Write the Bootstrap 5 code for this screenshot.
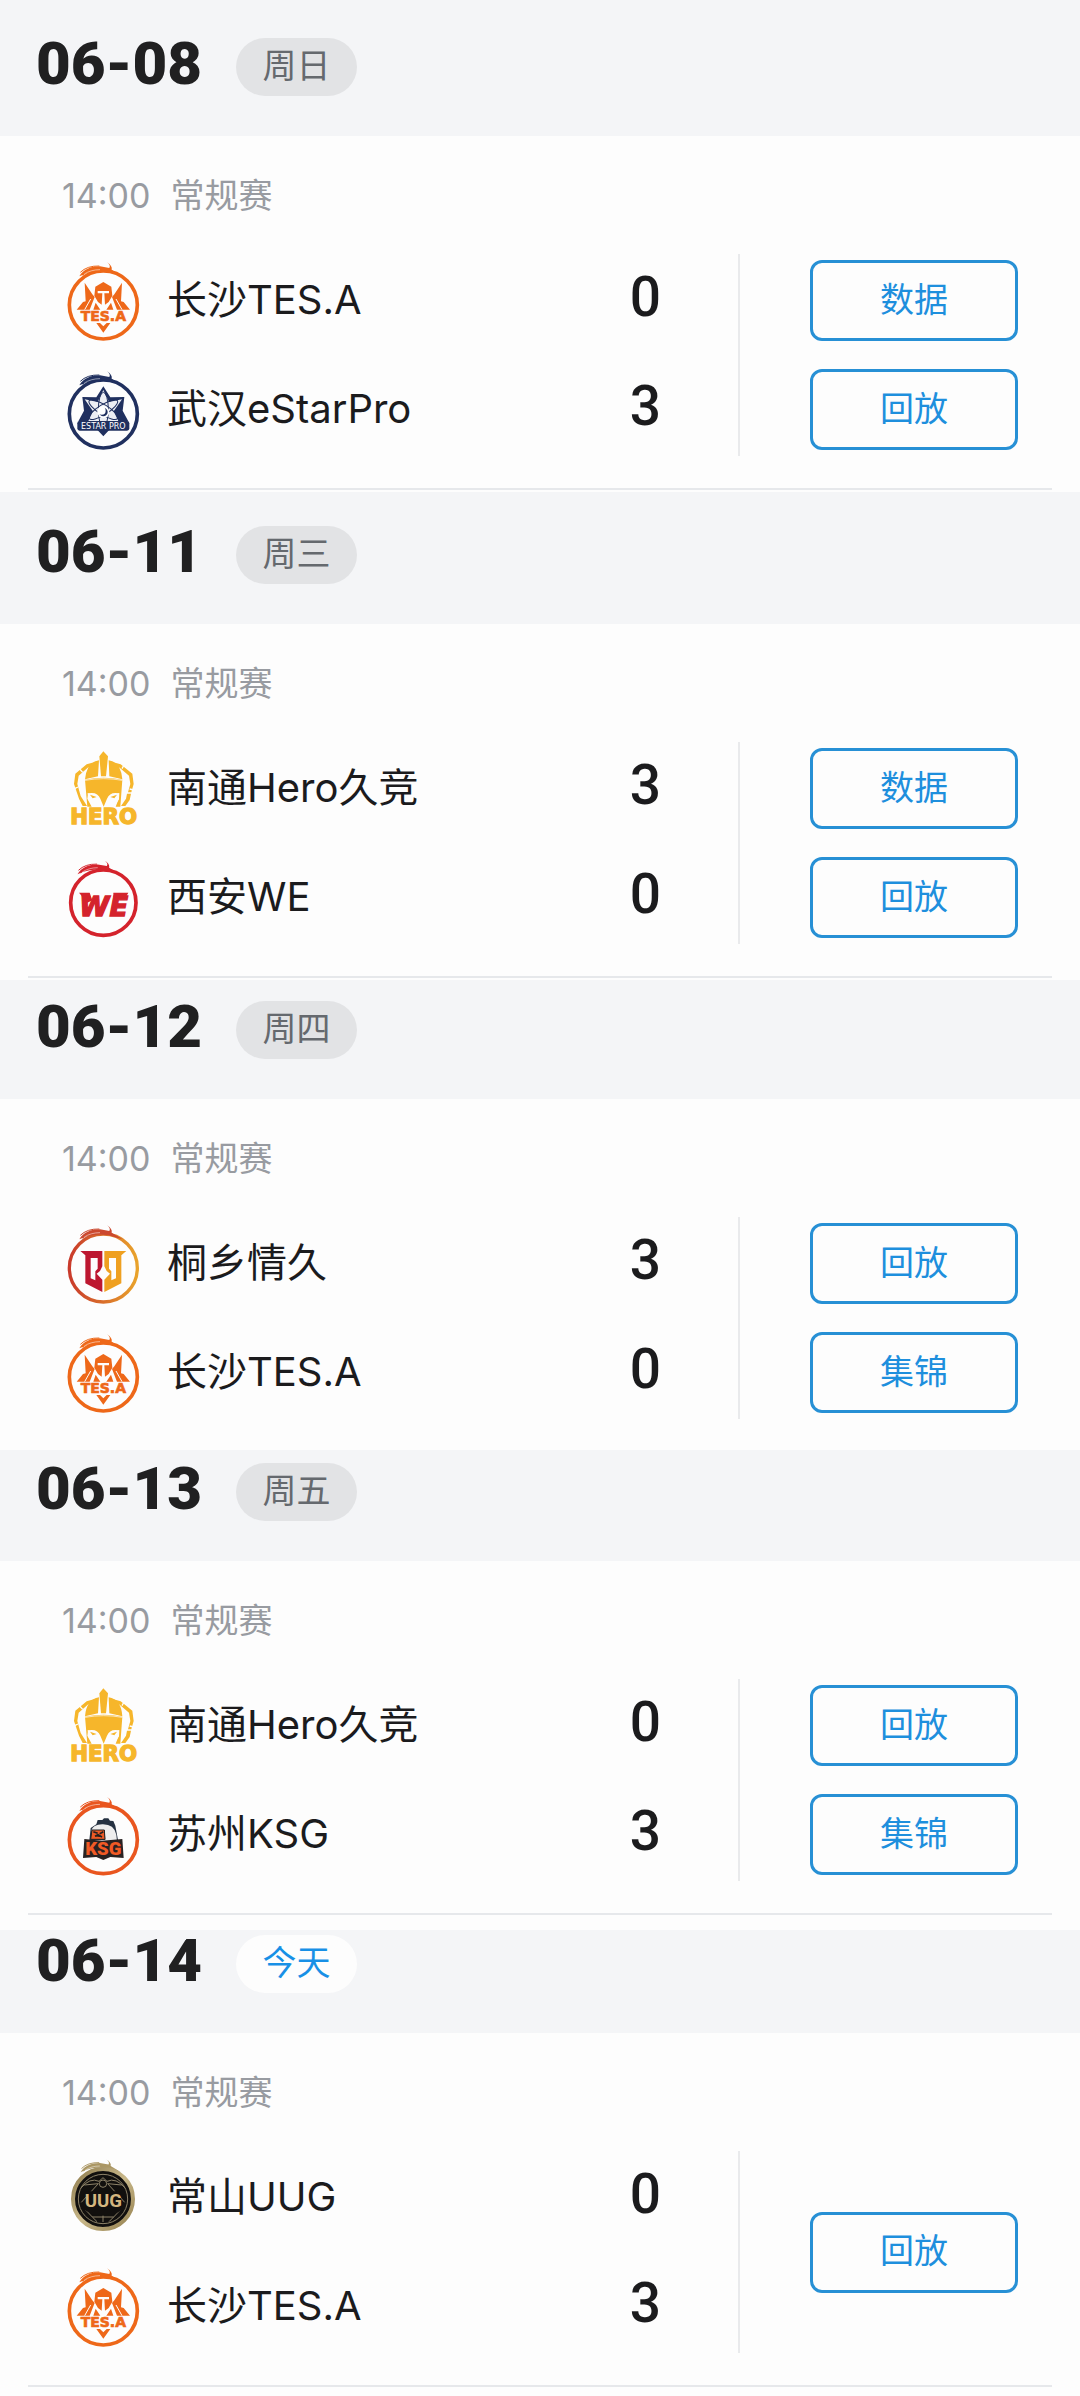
<!DOCTYPE html>
<html lang="zh-CN">
<head>
<meta charset="utf-8">
<meta name="viewport" content="width=device-width, initial-scale=1">
<title>赛程</title>
<link href="https://cdn.jsdelivr.net/npm/bootstrap@5.3.0/dist/css/bootstrap.min.css" rel="stylesheet">
<style>
  body { background: #fdfdfd; color: #1b1b1d; font-family: Inter, "Noto Sans CJK SC", sans-serif; }
  .day-head { background: #f4f5f7; padding: 38px 36px 40px; gap: 36px; }
  .day-head.lead-34 { padding-top: 34px; }
  .day-head.lead-21 { padding-top: 21px; }
  .day-head.lead-13 { padding-top: 13px; }
  .day-head.lead-5 { padding-top: 5px; }
  .day-date { font: 900 60px/52px Roboto, sans-serif; width: 164px; color: #202021; }
  .day-pill { width: 121px; height: 58px; font-size: 34px; line-height: 55px; background: #e2e3e5; color: #65696e; }
  .day-pill.today { background: #fdfdfd; color: #1890e6; }
  .match { padding: 35px 28px 0; }
  .match-info { font-size: 34px; line-height: 50px; gap: 20px; padding: 0 34px 33px; color: #989ba1; }
  .match-body { padding-left: 30px; padding-right: 34px; }
  .teams { gap: 16px; padding-right: 77px; border-right: 2px solid #e9eaec; }
  .team { height: 93px; }
  .team-logo { width: 90px; height: 90px; margin-right: 19px; }
  .team-name { font-size: 40px; line-height: 88px; padding-bottom: 2px; }
  .team-score { font: 500 55px/83px Roboto, sans-serif; padding-bottom: 6px; }
  .actions { gap: 28px; width: 278px; }
  .btn-act { width: 208px; height: 81px; padding: 0 0 2px; font-size: 34px; line-height: 1; border: 3px solid #2790d5; border-radius: 12px; color: #1e8fdd; }
  .btn-act:hover { background: #2790d5; color: #fff; }
  .rule { height: 2px; margin-top: 32px; margin-bottom: 2px; background: #e6e8eb; }
  .rule.space-15 { margin-bottom: 15px; }
  .no-rule { padding-bottom: 31px; }
  .c-tes { color: #ee6819; } .c-estar { color: #20305f; } .c-we { color: #d4232c; } .c-ksg { color: #e9561f; } .c-gold { color: #ab9764; }
  .c-hero { color: #f6b62b; }
</style>
</head>
<body>
<svg class="position-absolute" width="0" height="0" aria-hidden="true" xmlns="http://www.w3.org/2000/svg">
  <defs>
    <linearGradient id="gg" x1="0" x2="1"><stop offset="0" stop-color="#c93a2b"/><stop offset="1" stop-color="#e9a32b"/></linearGradient>
    <linearGradient id="au" x1="0" x2="1" y2="1"><stop offset="0" stop-color="#8d7a4c"/><stop offset=".5" stop-color="#c9b88a"/><stop offset="1" stop-color="#94804e"/></linearGradient>
  </defs>
  <symbol id="flame" viewBox="24 16 270 270">
    <path d="M88 77C100 56 122 47 150 47L178 52Q183 44 171 35Q188 46 185 57L217 76L201 72Q169 60 139 63Q111 65 88 77Z" fill="currentColor"/>
    <path d="M91 65Q111 45 148 46M97 73Q116 57 144 57" fill="none" stroke="currentColor" stroke-width="3"/>
    <path d="M103 70Q123 57 150 57" fill="none" stroke="#fff" stroke-width="1.5"/>
  </symbol>
  <symbol id="ring" viewBox="24 16 270 270">
    <circle cx="160" cy="163" r="102" fill="none" stroke="currentColor" stroke-width="11"/>
    <use href="#flame" x="24" y="16" width="270" height="270"/>
  </symbol>
  <symbol id="tes" viewBox="24 16 270 270">
    <use href="#ring" x="24" y="16" width="270" height="270"/>
    <g fill="currentColor">
      <path d="M104 96L127 131L134 139L119 177H80L99 154L107 152Z"/>
      <path d="M216 96L193 131L186 139L201 177H240L221 154L213 152Z"/>
      <path d="M160 94L184 108L187 135L176 154L165 162L163 128H177V121H143V128H157L155 162L144 154L133 135L136 108Z"/>
      <path d="M137 156L151 177H130ZM183 156L169 177H190Z"/>
      <path d="M139 217H150L160 227L170 217H181L160 246Z"/>
    </g>
    <path d="M104 177L122 145M216 177L198 145" fill="none" stroke="#fdfdfd" stroke-width="3"/>
    <text x="160" y="212" text-anchor="middle" font-family="DejaVu Sans, sans-serif" font-weight="700" font-size="42" fill="currentColor" stroke="currentColor" stroke-width="2">TES.A</text>
  </symbol>
  <symbol id="estar" viewBox="24 16 270 270">
    <use href="#ring" x="24" y="16" width="270" height="270"/>
    <path d="M160 80L181 113L223 112L218 153L235 185L181 207L160 230L139 207L85 185L102 153L97 112L139 113Z" fill="currentColor"/>
    <path d="M160 91L177 127L216 119L191 155L206 186H114L129 155L104 119L143 127Z" fill="#eceef4"/>
    <g fill="none" stroke="currentColor" stroke-width="3">
      <ellipse cx="160" cy="150" rx="15" ry="52"/>
      <ellipse cx="160" cy="150" rx="15" ry="50" transform="rotate(58 160 150)"/>
      <ellipse cx="160" cy="150" rx="15" ry="50" transform="rotate(-58 160 150)"/>
    </g>
    <circle cx="160" cy="157" r="18" fill="#fff"/><circle cx="160" cy="157" r="13" fill="currentColor"/><circle cx="155" cy="153" r="12" fill="#fff"/>
    <rect x="82" y="184" width="156" height="29" rx="7" fill="currentColor"/>
    <text x="160" y="207" text-anchor="middle" font-family="DejaVu Sans, sans-serif" font-size="24" fill="#fff">ESTAR PRO</text>
  </symbol>
  <symbol id="hero" viewBox="24 16 270 270">
    <g fill="currentColor">
      <path d="M148 53L160 38L174 53L168 113H153Z"/>
      <path d="M147 65Q109 72 105 122L144 113ZM176 65Q214 72 217 122L178 113Z"/>
      <path d="M105 123Q161 111 217 123L211 204H197L206 180L207 164Q180 158 171 180L161 204L151 180Q142 158 115 164L112 180L125 204H112Z"/>
      <path d="M142 68L110 77L76 105L72 136L87 180L98 202H111L92 172L82 136L86 111L113 87L139 78ZM180 68L212 77L247 105L251 136L244 161L234 161L241 136L237 111L209 87L184 78ZM231 165H243L239 184L226 202H213L228 180Z"/>
    </g>
    <path d="M113 163L146 175L137 204H128L114 182ZM208 163L175 175L184 204H193L207 182Z" fill="#fdfdfd"/>
    <path d="M120 168L140 175L128 179ZM201 168L181 175L193 179Z" fill="currentColor"/>
    <path d="M105 125Q161 115 217 125" fill="none" stroke="#fdfdfd" stroke-width="2"/>
    <path d="M69 152L84 145M89 91L98 101M239 151L251 154M222 79L216 90" stroke="#fdfdfd" stroke-width="4"/>
    <text x="161" y="255" text-anchor="middle" font-family="DejaVu Sans, sans-serif" font-weight="700" font-size="64" fill="currentColor" stroke="currentColor" stroke-width="4">HERO</text>
  </symbol>
  <symbol id="we" viewBox="24 16 270 270">
    <circle cx="160" cy="165" r="98" fill="none" stroke="currentColor" stroke-width="11"/>
    <use href="#flame" x="20" y="20" width="264" height="264"/>
    <path d="M87 135H119L127 158L112 165ZM190 135H235L228 147H190Z" fill="currentColor"/>
    <text x="161" y="204" text-anchor="middle" font-family="DejaVu Sans, sans-serif" font-style="italic" font-weight="700" font-size="82" fill="currentColor" stroke="currentColor" stroke-width="4">WE</text>
  </symbol>
  <symbol id="qing" viewBox="24 16 270 270">
    <circle cx="160" cy="163" r="102" fill="none" stroke="url(#gg)" stroke-width="10"/>
    <g color="#cb482e"><use href="#flame" x="24" y="16" width="270" height="270"/></g>
    <path d="M91 112H157V158L150 172L140 180L157 198V235L106 209V125ZM122 133V194L136 200V173L143 165V133Z" fill="#bd1730" fill-rule="evenodd"/>
    <path d="M229 112H163V158L170 172L180 180L163 198V235L214 209V125ZM198 133V194L184 200V173L177 165V133Z" fill="#efa020" fill-rule="evenodd"/>
  </symbol>
  <symbol id="ksg" viewBox="24 16 270 270">
    <g transform="translate(0 2)"><use href="#ring" x="24" y="16" width="270" height="270"/></g>
    <path d="M118 167L122 130L139 119L143 106H157L162 101H175L180 108L190 109L196 123L204 166Z" fill="#263242"/>
    <path d="M124 138Q128 120 157 119Q192 118 199 150L201 170H166L164 136Z" fill="#eee"/>
    <path d="M126 136H163L165 164H122Z" fill="#ed5a25" stroke="#222" stroke-width="3"/>
    <path d="M130 141L143 146M149 147L160 141M135 155L144 150L156 157" stroke="#222" stroke-width="5"/>
    <path d="M103 163L156 168L217 163L221 220L181 217L160 226L139 217L99 220Z" fill="#292222"/>
    <text x="160" y="212" text-anchor="middle" font-family="Roboto, sans-serif" font-weight="900" font-size="56" fill="#f15a25">KSG</text>
  </symbol>
  <symbol id="uug" viewBox="24 16 270 270">
    <g transform="translate(10 2) scale(.93)"><use href="#flame" x="24" y="16" width="270" height="270"/></g>
    <circle cx="159" cy="154" r="90" fill="#12100e" stroke="url(#au)" stroke-width="12"/>
    <circle cx="159" cy="154" r="74" fill="none" stroke="#8d8268" stroke-width="3"/>
    <g fill="none" stroke="#8d8268" stroke-width="3"><path d="M92 122Q120 88 147 101L159 90L171 101Q198 88 226 122M103 112L145 108L94 164M215 112L173 108L224 164M108 188L127 208H191L210 188M159 204V223M127 208L141 222M191 208L177 222"/><circle cx="159" cy="108" r="11"/></g>
    <path d="M108 131H212V189L190 201H130L108 189Z" fill="#12100e"/>
    <text x="160" y="178" text-anchor="middle" font-family="Roboto, sans-serif" font-weight="700" font-size="56" fill="#d4b67f">UUG</text>
  </symbol>
</svg>

<main>
  <section>
    <header class="day-head d-flex align-items-start">
      <h2 class="day-date m-0 text-nowrap">06-08</h2>
      <span class="day-pill rounded-pill text-center">周日</span>
    </header>
    <article class="match">
      <div class="match-info d-flex"><time>14:00</time><span>常规赛</span></div>
      <div class="match-body d-flex">
        <div class="teams d-flex flex-column flex-grow-1">
          <div class="team d-flex align-items-center"><svg class="team-logo c-tes"><use href="#tes"/></svg><span class="team-name">长沙TES.A</span><span class="team-score ms-auto">0</span></div>
          <div class="team d-flex align-items-center"><svg class="team-logo c-estar"><use href="#estar"/></svg><span class="team-name">武汉eStarPro</span><span class="team-score ms-auto">3</span></div>
        </div>
        <div class="actions d-flex flex-column align-items-end justify-content-center"><button type="button" class="btn btn-act">数据</button><button type="button" class="btn btn-act">回放</button></div>
      </div>
      <div class="rule"></div>
    </article>
  </section>

  <section>
    <header class="day-head lead-34 d-flex align-items-start">
      <h2 class="day-date m-0 text-nowrap">06-11</h2>
      <span class="day-pill rounded-pill text-center">周三</span>
    </header>
    <article class="match">
      <div class="match-info d-flex"><time>14:00</time><span>常规赛</span></div>
      <div class="match-body d-flex">
        <div class="teams d-flex flex-column flex-grow-1">
          <div class="team d-flex align-items-center"><svg class="team-logo c-hero"><use href="#hero"/></svg><span class="team-name">南通Hero久竞</span><span class="team-score ms-auto">3</span></div>
          <div class="team d-flex align-items-center"><svg class="team-logo c-we"><use href="#we"/></svg><span class="team-name">西安WE</span><span class="team-score ms-auto">0</span></div>
        </div>
        <div class="actions d-flex flex-column align-items-end justify-content-center"><button type="button" class="btn btn-act">数据</button><button type="button" class="btn btn-act">回放</button></div>
      </div>
      <div class="rule"></div>
    </article>
  </section>

  <section>
    <header class="day-head lead-21 d-flex align-items-start">
      <h2 class="day-date m-0 text-nowrap">06-12</h2>
      <span class="day-pill rounded-pill text-center">周四</span>
    </header>
    <article class="match no-rule">
      <div class="match-info d-flex"><time>14:00</time><span>常规赛</span></div>
      <div class="match-body d-flex">
        <div class="teams d-flex flex-column flex-grow-1">
          <div class="team d-flex align-items-center"><svg class="team-logo"><use href="#qing"/></svg><span class="team-name">桐乡情久</span><span class="team-score ms-auto">3</span></div>
          <div class="team d-flex align-items-center"><svg class="team-logo c-tes"><use href="#tes"/></svg><span class="team-name">长沙TES.A</span><span class="team-score ms-auto">0</span></div>
        </div>
        <div class="actions d-flex flex-column align-items-end justify-content-center"><button type="button" class="btn btn-act">回放</button><button type="button" class="btn btn-act">集锦</button></div>
      </div>
    </article>
  </section>

  <section>
    <header class="day-head lead-13 d-flex align-items-start">
      <h2 class="day-date m-0 text-nowrap">06-13</h2>
      <span class="day-pill rounded-pill text-center">周五</span>
    </header>
    <article class="match">
      <div class="match-info d-flex"><time>14:00</time><span>常规赛</span></div>
      <div class="match-body d-flex">
        <div class="teams d-flex flex-column flex-grow-1">
          <div class="team d-flex align-items-center"><svg class="team-logo c-hero"><use href="#hero"/></svg><span class="team-name">南通Hero久竞</span><span class="team-score ms-auto">0</span></div>
          <div class="team d-flex align-items-center"><svg class="team-logo c-ksg"><use href="#ksg"/></svg><span class="team-name">苏州KSG</span><span class="team-score ms-auto">3</span></div>
        </div>
        <div class="actions d-flex flex-column align-items-end justify-content-center"><button type="button" class="btn btn-act">回放</button><button type="button" class="btn btn-act">集锦</button></div>
      </div>
      <div class="rule space-15"></div>
    </article>
  </section>

  <section>
    <header class="day-head lead-5 d-flex align-items-start">
      <h2 class="day-date m-0 text-nowrap">06-14</h2>
      <span class="day-pill today rounded-pill text-center">今天</span>
    </header>
    <article class="match">
      <div class="match-info d-flex"><time>14:00</time><span>常规赛</span></div>
      <div class="match-body d-flex">
        <div class="teams d-flex flex-column flex-grow-1">
          <div class="team d-flex align-items-center"><svg class="team-logo c-gold"><use href="#uug"/></svg><span class="team-name">常山UUG</span><span class="team-score ms-auto">0</span></div>
          <div class="team d-flex align-items-center"><svg class="team-logo c-tes"><use href="#tes"/></svg><span class="team-name">长沙TES.A</span><span class="team-score ms-auto">3</span></div>
        </div>
        <div class="actions d-flex flex-column align-items-end justify-content-center"><button type="button" class="btn btn-act">回放</button></div>
      </div>
      <div class="rule"></div>
    </article>
  </section>
</main>
<script src="https://cdn.jsdelivr.net/npm/bootstrap@5.3.0/dist/js/bootstrap.bundle.min.js"></script>
</body>
</html>
